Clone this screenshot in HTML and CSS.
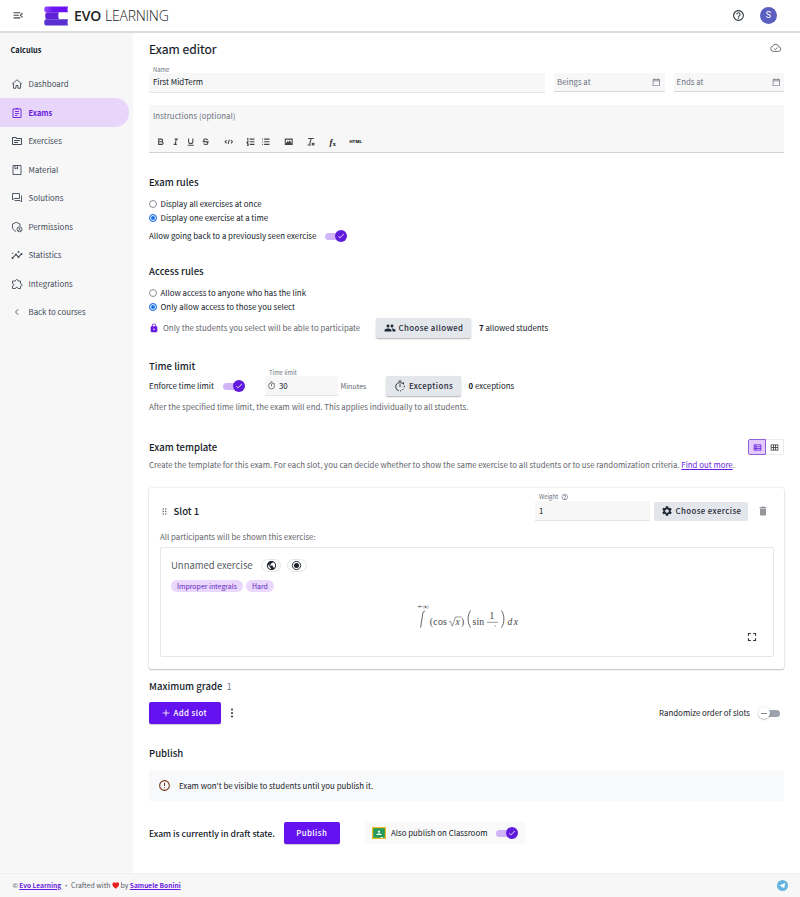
FILE: index.html
```html
<!DOCTYPE html>
<html lang="en">
<head>
<meta charset="utf-8">
<title>Exam editor</title>
<link rel="stylesheet" href="styles.css">
</head>
<body>
<svg class="defs" aria-hidden="true">
  <symbol id="i-menu" viewBox="0 0 24 24"><path d="M3 18h13v-2H3v2zM3 6v2h13V6H3zm0 7h10v-2H3v2zM21 15.590L17.420 12 21 8.410 19.590 7l-5 5 5 5L21 15.590z"/></symbol>
  <symbol id="i-help" viewBox="0 0 24 24"><path d="M11 18h2v-2h-2v2zm1-16C6.480 2 2 6.480 2 12s4.480 10 10 10 10-4.480 10-10S17.520 2 12 2zm0 18c-4.410 0-8-3.590-8-8s3.590-8 8-8 8 3.590 8 8-3.590 8-8 8zm0-14c-2.210 0-4 1.790-4 4h2c0-1.100.9-2 2-2s2 .9 2 2c0 2-3 1.750-3 5h2c0-2.250 3-2.500 3-5 0-2.210-1.790-4-4-4z"/></symbol>
  <symbol id="i-check" viewBox="0 0 24 24"><path d="M9 16.170L4.830 12l-1.420 1.410L9 19 21 7l-1.410-1.410z"/></symbol>
  <symbol id="i-timer" viewBox="0 0 24 24"><path d="M9 1h6v2H9zM11 8h2v6h-2z"/><circle cx="12" cy="13" r="8" fill="none" stroke="currentColor" stroke-width="2"/><path d="M18 5.500l2 2" stroke="currentColor" stroke-width="2"/></symbol>
  <symbol id="i-cal" viewBox="0 0 24 24"><path d="M20 3h-1V1h-2v2H7V1H5v2H4c-1.100 0-2 .9-2 2v16c0 1.100.9 2 2 2h16c1.100 0 2-.9 2-2V5c0-1.100-.9-2-2-2zm0 18H4V9h16v12zm0-14H4V5h16v2z"/></symbol>
</svg>

<header class="topbar">
  <svg class="ic menu"><use href="#i-menu"/></svg>
  <svg class="logo" viewBox="0 0 24 20">
    <defs><linearGradient id="lg" x1="0" x2="1"><stop offset="0" stop-color="#9a4dff"/><stop offset=".35" stop-color="#6a17f0"/><stop offset="1" stop-color="#6a10f5"/></linearGradient></defs>
    <path d="M2 .5h22c-.6 2-.6 3.700 0 5.800H2C-.3 6.300-.3.5 2 .5z" fill="url(#lg)"/>
    <path d="M3 6.300h12c-1 2-1 4.600 0 7H3C.6 13.300.6 6.300 3 6.300z" fill="#5f22d6"/>
    <path d="M2 13.300h22c-.6 2-.6 4.200 0 6.200H2c-2.300 0-2.300-6.200 0-6.200z" fill="#5a2fd0"/>
  </svg>
  <div class="brand"><b>EVO</b> <span>LEARNING</span></div>
  <svg class="ic help"><use href="#i-help"/></svg>
  <div class="avatar">S</div>
</header>

<div class="middle">
  <nav class="sidebar">
    <div class="course">Calculus</div>
    <a class="nav"><svg class="ic o" viewBox="0 0 24 24"><path d="M2 12.500L12 3.500l10 9M5 11v9.500h5V15h4v5.500h5V11"/></svg>Dashboard</a>
    <a class="nav active"><svg class="ic o" viewBox="0 0 24 24"><path d="M4 4h16v17H4zM8 9h8M8 13h8M8 17h5M9 3h6"/></svg>Exams</a>
    <a class="nav"><svg class="ic" viewBox="0 0 24 24"><path d="M20 6h-8l-2-2H4c-1.100 0-1.990.9-1.990 2L2 18c0 1.100.9 2 2 2h16c1.100 0 2-.9 2-2V8c0-1.100-.9-2-2-2zm0 12H4V6h5.170l2 2H20v10zm-2-6H6v-2h12v2zm-4 4H6v-2h8v2z"/></svg>Exercises</a>
    <a class="nav"><svg class="ic o" viewBox="0 0 24 24"><path d="M4 3h16v18H4zM8 3v7l2.500-2L13 10V3"/></svg>Material</a>
    <a class="nav"><svg class="ic o" viewBox="0 0 24 24"><path d="M3 3h14v10H6l-3 3zM21 7v13l-3-3H7"/></svg>Solutions</a>
    <a class="nav"><svg class="ic o" viewBox="0 0 24 24"><path d="M10 20.500C6 19.500 3 16 3 12V6l7.500-3.500L18 6v4"/><circle cx="17" cy="16.500" r="5"/><path d="M14.500 19c1-1.500 4-1.500 5 0"/><circle cx="17" cy="15" r=".8"/></svg>Permissions</a>
    <a class="nav"><svg class="ic" viewBox="0 0 24 24"><path d="M21 8c-1.450 0-2.260 1.440-1.930 2.510l-3.550 3.560c-.3-.09-.74-.09-1.040 0l-2.550-2.550C12.270 10.450 11.460 9 10 9c-1.450 0-2.270 1.440-1.930 2.520l-4.560 4.550C2.440 15.740 1 16.550 1 18c0 1.100.9 2 2 2 1.450 0 2.260-1.440 1.930-2.510l4.550-4.560c.3.09.74.09 1.040 0l2.550 2.550C12.730 16.550 13.540 18 15 18c1.450 0 2.270-1.440 1.930-2.520l3.560-3.550C21.560 12.260 23 11.450 23 10c0-1.100-.9-2-2-2zM15 9l.94-2.070L18 6l-2.060-.93L15 3l-.92 2.070L12 6l2.080.93zM3.500 11L4 9l2-.5L4 8l-.5-2L3 8l-2 .5L3 9z"/></svg>Statistics</a>
    <a class="nav"><svg class="ic o" viewBox="0 0 24 24"><path d="M3 6h6c0-4 5-4 5 0h5v5.500c4 0 4 5 0 5V21h-5c0-3.500-5-3.500-5 0H3v-5c3.500 0 3.500-5 0-5z"/></svg>Integrations</a>
    <a class="nav"><svg class="ic o" viewBox="0 0 24 24"><path d="M14.500 6.500L9 12l5.500 5.500"/></svg>Back to courses</a>
  </nav>

  <main class="main">
    <div class="row title"><h1>Exam editor</h1>
      <svg class="ic o cloud" viewBox="0 0 24 24"><path d="M7 19.500a5.500 5.500 0 0 1-1-10.900A6.500 6.500 0 0 1 18.300 10 4.800 4.800 0 0 1 18.500 19.500zM8.500 13.500l2.500 2.500 4.500-4.500"/></svg></div>

    <div class="fields">
      <label class="field name"><span class="float">Name</span>First MidTerm</label>
      <label class="field date">Beings at<svg class="ic"><use href="#i-cal"/></svg></label>
      <label class="field date">Ends at<svg class="ic"><use href="#i-cal"/></svg></label>
    </div>

    <div class="editor">
      <div class="placeholder">Instructions (optional)</div>
      <div class="tools">
        <svg viewBox="0 0 18 18"><path d="M5 4h5a2.500 2.500 0 0 1 0 5H5zM5 9h6a2.500 2.500 0 0 1 0 5H5z"/></svg>
        <svg viewBox="0 0 18 18"><path d="M7 4h6M5 14h6M8 14l2-10"/></svg>
        <svg viewBox="0 0 18 18"><path d="M5 3v6c0 4.500 8 4.500 8 0V3M3.500 15.500h11"/></svg>
        <svg viewBox="0 0 18 18"><path d="M13 5.500C11 3 5 3 5 6c0 2 2 2.500 4 3s4 1 4 3c0 3-6 3-8 .5M3 9h12"/></svg>
        <svg class="gap" viewBox="0 0 18 18"><path d="M5 6L2 9l3 3M13 6l3 3-3 3M10 5L8 13"/></svg>
        <svg class="gap" viewBox="0 0 18 18"><path d="M7 4h9M7 9h9M7 14h9M2 3h1.500v3M2 8h2l-2 3h2M2 13h2v3H2"/></svg>
        <svg viewBox="0 0 18 18"><path d="M6 4h10M6 9h10M6 14h10M2 4h1.500M2 9h1.500M2 14h1.500"/></svg>
        <svg class="gap" viewBox="0 0 18 18"><path d="M2.500 4h13v10h-13zM5 12l2-3 2 2 2-3 2 4z"/></svg>
        <svg class="gap" viewBox="0 0 18 18"><path d="M4 3h11M9.500 3L7 14M3 15h6M11 11l5 5M16 11l-5 5"/></svg>
        <span class="fx"><i>f</i><sub>x</sub></span>
        <span class="html">HTML</span>
      </div>
    </div>

    <h2 class="h-rules">Exam rules</h2>
    <label class="radio first"><i class="dot"></i>Display all exercises at once</label>
    <label class="radio"><i class="dot on"></i>Display one exercise at a time</label>
    <div class="row back">Allow going back to a previously seen exercise<span class="toggle on"><b><svg><use href="#i-check"/></svg></b></span></div>

    <h2 class="h-access">Access rules</h2>
    <label class="radio first"><i class="dot"></i>Allow access to anyone who has the link</label>
    <label class="radio"><i class="dot on"></i>Only allow access to those you select</label>
    <div class="row allow">
      <svg class="ic lock" viewBox="0 0 24 24"><path d="M18 8h-1V6c0-2.760-2.240-5-5-5S7 3.240 7 6v2H6c-1.100 0-2 .9-2 2v10c0 1.100.9 2 2 2h12c1.100 0 2-.9 2-2V10c0-1.100-.9-2-2-2zm-6 9c-1.100 0-2-.9-2-2s.9-2 2-2 2 .9 2 2-.9 2-2 2zm3.100-9H8.900V6c0-1.710 1.390-3.100 3.100-3.100 1.710 0 3.100 1.390 3.100 3.100v2z"/></svg>
      <span class="muted note">Only the students you select will be able to participate</span>
      <button class="btn grey choose-allowed"><svg class="ic" viewBox="0 0 24 24"><path d="M16 11c1.660 0 2.990-1.340 2.990-3S17.660 5 16 5c-1.660 0-3 1.340-3 3s1.340 3 3 3zm-8 0c1.660 0 2.990-1.340 2.990-3S9.660 5 8 5C6.340 5 5 6.340 5 8s1.340 3 3 3zm0 2c-2.330 0-7 1.170-7 3.500V19h14v-2.500c0-2.330-4.670-3.500-7-3.500zm8 0c-.29 0-.62.02-.97.05 1.160.84 1.970 1.970 1.970 3.450V19h6v-2.500c0-2.330-4.670-3.500-7-3.500z"/></svg>Choose allowed</button>
      <span><b>7</b> allowed students</span>
    </div>

    <h2 class="h-time">Time limit</h2>
    <div class="row time">
      <span class="enforce">Enforce time limit</span><span class="toggle on"><b><svg><use href="#i-check"/></svg></b></span>
      <label class="field mins"><span class="float">Time limit</span><svg class="ic"><use href="#i-timer"/></svg>30</label>
      <span class="muted unit">Minutes</span>
      <button class="btn grey exceptions"><svg class="ic o" viewBox="0 0 24 24"><path d="M9 2h6M12 8.500V14"/><path d="M9.500 21.600A8.500 8.500 0 0 1 7 6.500Q12 3.500 17 6.500l2 2V4.500"/><path d="M20.500 11.500v3M19 17.500l-2 2.200M14.500 21.300l-2.500.5"/></svg>Exceptions</button>
      <span><b>0</b> exceptions</span>
    </div>
    <p class="muted after">After the specified time limit, the exam will end. This applies individually to all students.</p>

    <div class="row template"><h2>Exam template</h2>
      <div class="seg">
        <span class="on"><svg class="ic" viewBox="0 0 24 24"><path d="M2 4h20v16H2zM4 6v3h3V6zm0 5v2.500h3V11zm0 4.500V18h3v-2.500zM9 6v3h11V6zm0 5v2.500h11V11zm0 4.500V18h11v-2.500z" fill-rule="evenodd"/></svg></span>
        <span><svg class="ic" viewBox="0 0 24 24"><path d="M2 4h20v16H2zM4 6v5h4V6zm6 0v5h4V6zm6 0v5h4V6zM4 13v5h4v-5zm6 0v5h4v-5zm6 0v5h4v-5z" fill-rule="evenodd"/></svg></span>
      </div>
    </div>
    <p class="muted desc">Create the template for this exam. For each slot, you can decide whether to show the same exercise to all students or to use randomization criteria. <a>Find out more</a>.</p>

    <section class="card">
      <div class="row slot">
        <svg class="grip" viewBox="0 0 5 7"><g><circle cx="1.200" cy="1" r=".65"/><circle cx="3.800" cy="1" r=".65"/><circle cx="1.200" cy="3.500" r=".65"/><circle cx="3.800" cy="3.500" r=".65"/><circle cx="1.200" cy="6" r=".65"/><circle cx="3.800" cy="6" r=".65"/></g></svg>
        <h2>Slot 1</h2>
        <label class="field weight"><span class="float">Weight <svg class="ic"><use href="#i-help"/></svg></span>1</label>
        <button class="btn grey choose-ex"><svg class="ic" viewBox="0 0 24 24"><path d="M19.140 12.940c.04-.3.06-.61.06-.94 0-.32-.02-.64-.07-.94l2.030-1.580c.18-.14.23-.41.12-.61l-1.920-3.320c-.12-.22-.37-.29-.59-.22l-2.390.96c-.5-.38-1.030-.7-1.620-.94l-.36-2.540c-.04-.24-.24-.41-.48-.41h-3.840c-.24 0-.43.17-.47.41l-.36 2.540c-.59.24-1.130.57-1.620.94l-2.390-.96c-.22-.08-.47 0-.59.22L2.740 8.870c-.12.21-.08.47.12.61l2.030 1.580c-.05.3-.09.63-.09.94s.02.64.07.94l-2.030 1.580c-.18.14-.23.41-.12.61l1.920 3.320c.12.22.37.29.59.22l2.390-.96c.5.38 1.030.7 1.620.94l.36 2.540c.05.24.24.41.48.41h3.840c.24 0 .44-.17.47-.41l.36-2.540c.59-.24 1.130-.56 1.620-.94l2.390.96c.22.08.47 0 .59-.22l1.920-3.320c.12-.22.07-.47-.12-.61l-2.010-1.580zM12 15.600c-1.980 0-3.600-1.620-3.600-3.600s1.620-3.600 3.600-3.600 3.600 1.620 3.600 3.600-1.620 3.600-3.600 3.600z"/></svg>Choose exercise</button>
        <svg class="ic trash" viewBox="0 0 24 24"><path d="M6 19c0 1.100.9 2 2 2h8c1.100 0 2-.9 2-2V7H6v12zM19 4h-3.500l-1-1h-5l-1 1H5v2h14V4z"/></svg>
      </div>
      <p class="muted shown">All participants will be shown this exercise:</p>
      <div class="exercise">
        <div class="row ex-head"><span class="ex-name">Unnamed exercise</span>
          <span class="pill"><svg class="ic" viewBox="0 0 24 24"><path d="M12 2C6.480 2 2 6.480 2 12s4.480 10 10 10 10-4.480 10-10S17.520 2 12 2zm-1 17.930c-3.950-.49-7-3.850-7-7.930 0-.62.08-1.210.21-1.790L9 15v1c0 1.100.9 2 2 2v1.930zm6.900-2.540c-.26-.81-1-1.390-1.900-1.390h-1v-3c0-.55-.45-1-1-1H8v-2h2c.55 0 1-.45 1-1V7h2c1.100 0 2-.9 2-2v-.41c2.930 1.190 5 4.060 5 7.410 0 2.080-.8 3.970-2.100 5.390z"/></svg></span>
          <span class="pill"><svg class="ic" viewBox="0 0 24 24"><circle cx="12" cy="12" r="9" fill="none" stroke="currentColor" stroke-width="2"/><circle cx="12" cy="12" r="5.500"/></svg></span>
        </div>
        <div class="tags"><span>Improper integrals</span><span>Hard</span></div>
        <svg class="math" viewBox="0 0 102 26">
          <text x="0" y="6" font-size="7" textLength="12" lengthAdjust="spacingAndGlyphs" class="sup">+∞</text>
          <path d="M8.200 8.600C7.400 7.600 6.300 8 5.900 10L3.600 24.500" class="ln thick"/>
          <text x="12.800" y="22" font-size="9.600" textLength="17">(cos</text>
          <path d="M32 19l1.300-.8 2 5 3.200-9.200h6" class="ln"/>
          <text x="38.500" y="22" font-size="9.600" font-style="italic">x</text>
          <text x="44" y="22" font-size="9.600">)</text>
          <path d="M53.500 7.500c-3.200 5-3.200 12 0 17" class="ln thick"/>
          <text x="55.500" y="22" font-size="9.600" textLength="11.500">sin</text>
          <text x="72.500" y="15.800" font-size="9.600">1</text>
          <path d="M70 19.300h11M77.500 22.500l1.500 1" class="ln"/>
          <path d="M84.500 7.500c3.200 5 3.200 12 0 17" class="ln thick"/>
          <text x="90.500" y="22" font-size="9.600" font-style="italic" textLength="10.500">dx</text>
        </svg>
        <svg class="ic full" viewBox="0 0 24 24"><path d="M7 14H5v5h5v-2H7v-3zm-2-4h2V7h3V5H5v5zm12 7h-3v2h5v-5h-2v3zM14 5v2h3v3h2V5h-5z"/></svg>
      </div>
    </section>

    <div class="row grade"><h2>Maximum grade</h2><span>1</span></div>
    <div class="row add">
      <button class="btn primary add-slot"><svg class="ic o" viewBox="0 0 24 24"><path d="M12 2v20M2 12h20"/></svg>Add slot</button>
      <svg class="more" viewBox="0 0 4 10"><circle cx="2" cy="1.500" r="1"/><circle cx="2" cy="5" r="1"/><circle cx="2" cy="8.500" r="1"/></svg>
      <span class="rand">Randomize order of slots</span><span class="toggle"><b></b></span>
    </div>

    <h2 class="h-publish">Publish</h2>
    <div class="alert"><svg class="ic" viewBox="0 0 24 24"><circle cx="12" cy="12" r="9" fill="none" stroke="currentColor" stroke-width="2"/><path d="M11 7h2v6h-2zM11 15h2v2h-2z"/></svg>Exam won't be visible to students until you publish it.</div>
    <div class="row publish">
      <strong>Exam is currently in draft state.</strong>
      <button class="btn primary pub">Publish</button>
      <div class="classroom">
        <svg class="gc" viewBox="0 0 14 12"><path fill="#f4b92b" d="M0 0h14v12H0z"/><path fill="#249a5b" d="M1.200 1.200h11.600v9.600H1.200z"/><circle cx="7" cy="4.700" r="1.100" fill="#fff"/><path d="M4.200 8c0-2 5.600-2 5.600 0z" fill="#fff"/><path d="M8.500 10h2.500v.9H8.500z" fill="#dfe"/></svg>
        <span>Also publish on Classroom</span><span class="toggle on"><b><svg><use href="#i-check"/></svg></b></span>
      </div>
    </div>
  </main>
</div>

<footer class="footer">
  <span>©</span><a>Evo Learning</a><span class="mid">·</span><span>Crafted with</span>
  <svg class="heart" viewBox="0 0 24 22"><path d="M12 21C5 15.500 1 12 1 7a6 6 0 0 1 11-3.500A6 6 0 0 1 23 7c0 5-4 8.500-11 14z" fill="#ea2020"/></svg>
  <span>by</span><a class="author">Samuele Bonini</a>
  <svg class="tg" viewBox="0 0 24 24"><circle cx="12" cy="12" r="12" fill="#62b4de"/><path d="M4.500 12L18 6.500l-2.200 11.500-4-3-2 2-.6-3.800z" fill="#fff"/></svg>
</footer>
</body>
</html>
```
FILE: styles.css
```css
* { box-sizing: border-box; }
body { margin: 0; width: 800px; height: 897px; display: flex; flex-direction: column; background: #fff; color: #111827; font: 400 7.860px/14px "Noto Sans CJK SC", sans-serif; overflow: hidden; }
h1, h2, p { margin: 0; }
h1 { font-size: 12.150px; font-weight: 400; line-height: 18px; -webkit-text-stroke: .15px; }
h2 { font-size: 9.550px; font-weight: 500; line-height: 18px; white-space: nowrap; color: #151c2a; }
svg { display: block; flex: none; }
.defs { position: absolute; width: 0; height: 0; }
.ic { width: 12px; height: 12px; fill: currentColor; }
.ic.o { fill: none; stroke: currentColor; stroke-width: 1.800; }
.row { display: flex; align-items: center; white-space: nowrap; }
.muted { color: #5f636a; }

.topbar { height: 33px; flex: none; display: flex; align-items: center; padding: 0 23px 0 12px; border-bottom: 2px solid #dcdcde; }
.menu { width: 12.500px; height: 12.500px; color: #444; }
.logo { width: 24px; height: 20px; margin-left: 19.500px; }
.brand { margin-left: 6px; display: flex; gap: 4px; font: 300 14px/20px "Open Sans", sans-serif; color: #222; }
.brand b { font-weight: 600; letter-spacing: -.15px; }
.brand span { letter-spacing: -.25px; }
.help { margin-left: auto; width: 13px; height: 13px; color: #333b45; }
.avatar { margin-left: 15px; width: 17px; height: 17px; border-radius: 50%; background: #5a5fc0; color: #fff; text-align: center; font: 400 9px/17px Roboto, sans-serif; }

.middle { flex: 1; display: flex; min-height: 0; }
.sidebar { width: 133px; background: #f7f7f8; }
.course { margin: 10px 0 12.700px 10.500px; font-weight: 700; font-size: 7.400px; }
.nav { display: flex; align-items: center; gap: 6px; height: 28.550px; width: 128.500px; padding-left: 10.500px; border-radius: 0 14px 14px 0; color: #434b58; }
.nav.active { background: #e8d5fa; color: #6a1be0; font-weight: 700; font-size: 7.500px; }

.main { flex: 1; padding: 0 16px; display: flex; flex-direction: column; }
.title { height: 33px; justify-content: space-between; }
.title h1 { margin-top: -1px; }
.cloud { width: 11.500px; height: 11.500px; margin: -3px 3px 0 0; color: #555b64; }

.fields { display: flex; height: 39px; padding-top: 7px; gap: 9px; }
.field { position: relative; display: flex; align-items: center; height: 19.500px; padding: 0 4px; background: #f7f7f8; border-bottom: 1px solid #e3e4e7; }
.float { position: absolute; left: 4px; top: -8px; display: flex; gap: 3px; align-items: center; font-size: 5.900px; line-height: 10px; color: #6b7280; white-space: nowrap; }
.name { width: 396px; }
.date { flex: 1; height: 18.500px; justify-content: space-between; padding: 0 3px; color: #6b7280; border-color: #d6d8dc; }
.date .ic { width: 8.500px; height: 8.500px; margin-right: 1px; }

.editor { height: 48px; background: #f7f7f8; border-bottom: 1px solid #cfd2d7; }
.placeholder { padding: 4px 4px 0; color: #6b7280; letter-spacing: .04px; }
.tools { display: flex; align-items: center; height: 10px; margin: 14px 0 0 7px; gap: 5.500px; }
.tools svg { width: 9.500px; height: 9.500px; fill: none; stroke: #444; stroke-width: 2; }
.tools svg.gap { margin-left: 7.500px; }
.fx { margin-left: 8.500px; width: 10px; font: 700 9px/10px "Liberation Serif", serif; color: #222; }
.fx sub { font-size: 7px; line-height: 0; vertical-align: -1px; }
.html { margin-left: 4.500px; font: 900 4.400px/10px Roboto, sans-serif; letter-spacing: .1px; color: #222; }

.h-rules { margin-top: 20px; }
.h-access { margin-top: 18px; }
.h-time { margin-top: 19px; }
.h-publish { margin-top: 20px; }
.radio { display: flex; align-items: center; gap: 3.500px; height: 14px; }
.radio.first { margin-top: 6px; }
.dot { width: 8px; height: 8px; border: 1px solid #8b8f96; border-radius: 50%; }
.dot.on { border: 1px solid #2273e6; background: #1a6fe8; box-shadow: inset 0 0 0 1px #fff; }
.back { height: 16px; margin-top: 3px; }
.toggle { position: relative; width: 22px; height: 12px; display: flex; align-items: center; justify-content: flex-end; }
.toggle::before { content: ""; position: absolute; left: 0; top: 2.500px; width: 20px; height: 7px; border-radius: 4px; background: #9ca3af; }
.toggle b { position: relative; width: 12px; height: 12px; border-radius: 50%; background: #611bdc; }
.toggle b svg { width: 8px; height: 8px; margin: 2px; fill: #fff; }
.toggle.on::before { background: #d0b6f8; }
.back .toggle { margin-left: 9px; }
.allow { height: 20px; margin-top: 4px; }
.lock { width: 10px; height: 10px; color: #6a1be0; margin: 0 4.500px 0 -.5px; }
.btn { display: flex; align-items: center; justify-content: center; border: 0; padding: 0; border-radius: 2px; font: 500 7.850px/14px "Noto Sans CJK SC", sans-serif; letter-spacing: .4px; color: #1f2937; white-space: nowrap; }
.btn .ic { margin-right: 3px; }
.grey { background: #e3e6ea; height: 20px; box-shadow: 0 1px 1.500px rgba(0,0,0,.3); }
.note { width: 213px; }
.choose-allowed { width: 95px; margin: 0 8px 0 0; }
.time { height: 20px; margin-top: 1px; }
.enforce { width: 74px; }
.mins { width: 73px; margin-left: 20px; gap: 3px; padding-left: 2px; }
.mins .ic { width: 9px; height: 9px; color: #555; }
.unit { width: 48px; padding-left: 2.500px; font-size: 7px; }
.exceptions { width: 75px; margin-right: 7.500px; }
.after { margin-top: 4px; }
.template { height: 16px; margin-top: 25px; justify-content: space-between; }
.template h2 { margin-top: -1px; }
.seg { display: flex; width: 36px; height: 16px; }
.seg span { width: 18px; border: 1px solid #e9eaec; border-radius: 0 2px 2px 0; display: flex; align-items: center; justify-content: center; color: #333; }
.seg span + span { border-left: 0; }
.seg .on { background: #e3cbfb; border-color: #8f60d8; border-radius: 2px 0 0 2px; color: #6417e0; }
.seg .ic { width: 9px; height: 9px; }
.desc { margin-top: 3px; white-space: nowrap; font-size: 7.840px; }
.desc a, .footer a { color: #6a1be0; text-decoration: underline; }

.card { height: 181px; margin-top: 16px; padding: 13px 10px 0 11px; border-radius: 2px; box-shadow: 0 0 2px rgba(0,0,0,.2), 0 1px 1.500px rgba(0,0,0,.2); }
.slot { height: 20px; }
.grip { width: 5px; height: 7px; margin: 0 6.500px 0 2px; fill: #444; }
.weight { width: 115px; height: 20px; margin: 0 4px 0 auto; }
.weight .float { top: -9px; }
.weight .float .ic { width: 7.500px; height: 7.500px; }
.choose-ex { width: 94px; height: 19px; box-shadow: none; }
.trash { color: #96989c; margin: 0 5px 0 9px; }
.shown { margin-top: 9px; }
.exercise { height: 110px; margin-top: 3px; padding: 10px 10px 0; border: 1px solid #e6e7ea; border-radius: 2px; display: flex; flex-direction: column; }
.ex-head { height: 14px; font-size: 9.500px; color: #555b64; }
.ex-name { width: 90px; }
.pill { width: 20px; height: 13px; margin-right: 5.500px; border: 1px solid #e3e5e8; border-radius: 7px; display: flex; align-items: center; justify-content: center; color: #1f2430; }
.pill .ic { width: 11px; height: 11px; }
.tags { display: flex; gap: 3px; margin-top: 8px; }
.tags span { height: 12px; padding: 0 6px; border-radius: 6px; background: #ead7fc; color: #6425c4; font-size: 6.950px; line-height: 12px; }
.math { width: 102px; height: 26px; margin: 11px 0 0 246px; font-family: "Liberation Serif", serif; fill: #444; }
.math .ln { fill: none; stroke: #555; stroke-width: .6; }
.math .thick { stroke-width: .9; }
.full { width: 14px; height: 14px; margin: 1px 4px 0 auto; color: #333; }

.grade { margin-top: 8px; gap: 4.500px; font-size: 8.500px; color: #6b7280; }
.add { height: 22px; margin-top: 7px; }
.primary { background: #6412ef; color: #fff; height: 21.500px; box-shadow: 0 1px 1px rgba(0,0,0,.2); }
.add-slot { width: 71.500px; }
.add-slot .ic { width: 8px; height: 8px; stroke-width: 2.500; }
.more { width: 4px; height: 10px; margin-left: 9.500px; fill: #333; }
.rand { margin-left: auto; }
.add .toggle { margin: 0 4px 0 8px; justify-content: flex-start; }
.add .toggle::before { left: 2px; }
.add .toggle b { left: -.5px; background: #fff; box-shadow: 0 .5px 1.500px rgba(0,0,0,.4); }
.add .toggle b::after { content: ""; position: absolute; left: 3px; top: 5.500px; width: 6px; height: 1px; background: #888; }
.alert { height: 31px; margin-top: 8px; padding-left: 9px; background: #f8f9fb; display: flex; align-items: center; gap: 8px; }
.alert .ic { width: 13px; height: 13px; color: #7a3520; }
.publish { height: 22px; margin-top: 21px; }
.publish strong { width: 134.500px; font-weight: 500; font-size: 8.550px; }
.pub { width: 56.500px; }
.classroom { display: flex; align-items: center; width: 160px; height: 22px; margin-left: 25px; padding-left: 7px; background: #f9f9fa; }
.gc { width: 14px; height: 12px; margin-right: 5px; }
.classroom .toggle { margin-left: 9px; }

.footer { height: 24px; flex: none; display: flex; align-items: center; padding: 0 12px 1px 12.500px; background: #f7f7f8; border-top: 1px solid #f0f0f2; font-size: 6.900px; color: #555b64; white-space: nowrap; }
.footer a { margin-left: 1px; font-weight: 700; font-size: 6.600px; }
.footer .mid { margin: 0 1.500px; }
.footer .author { margin-left: 1.500px; }
.heart { width: 7.500px; height: 7px; margin: 0 1px 0 1.500px; }
.tg { width: 11px; height: 11px; margin-left: auto; }
```
